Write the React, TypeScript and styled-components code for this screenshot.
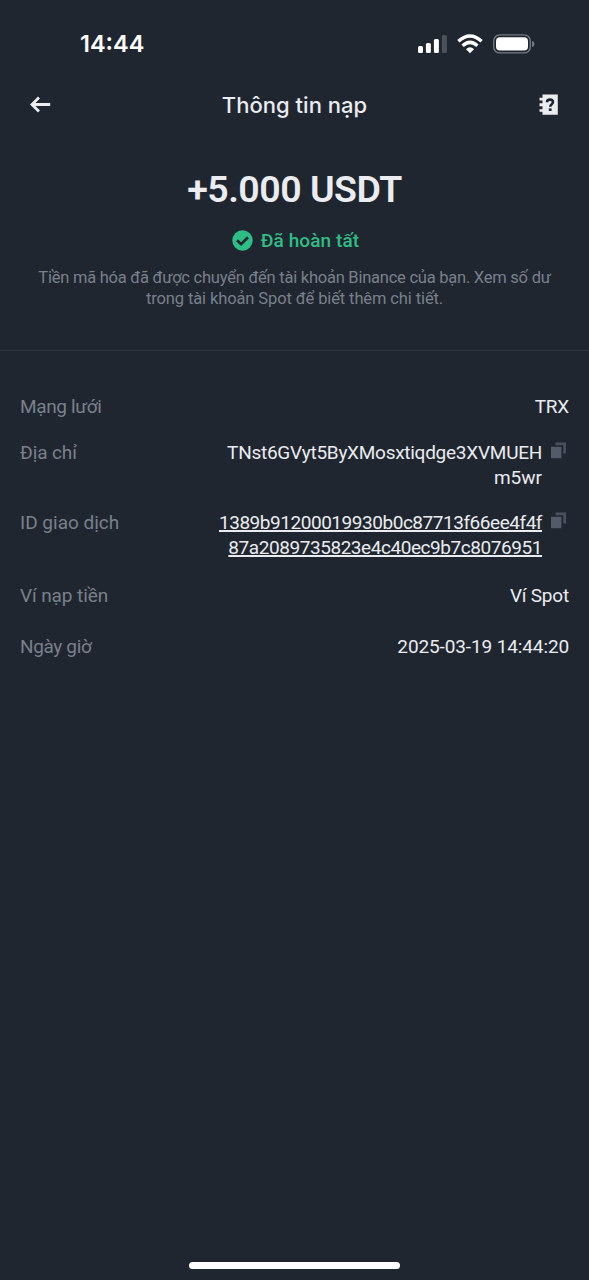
import React from 'react';
import styled, { createGlobalStyle } from 'styled-components';

const GlobalStyle = createGlobalStyle`
  * { box-sizing: border-box; }
  body { margin: 0; background: #202630; }
`;

const Screen = styled.main`
  display: flex;
  flex-direction: column;
  width: 100%;
  height: 1280px;
  background: #202630;
  color: #eaecef;
  font-family: Roboto, 'Noto Sans', sans-serif;
`;

const StatusBar = styled.div`
  display: flex;
  align-items: center;
  justify-content: space-between;
  height: 70px;
  padding: 17px 54px 0 80px;
`;

const Clock = styled.span`
  font: 600 23.5px/28px Inter, sans-serif;
  color: #fff;
`;

const Indicators = styled.div`
  display: flex;
  align-items: center;
  gap: 10px;
`;

const Header = styled.header`
  display: grid;
  grid-template-columns: 30px 1fr 30px;
  align-items: center;
  height: 70px;
  padding: 0 30px;
`;

const Title = styled.h1`
  margin: 0;
  text-align: center;
  font: 500 22px/30px Inter, sans-serif;
  letter-spacing: 0.03px;
`;

const IconButton = styled.button<{ $end?: boolean }>`
  display: flex;
  justify-content: ${(p) => (p.$end ? 'flex-end' : 'flex-start')};
  padding: 0;
  border: 0;
  background: none;
  color: #eaecef;
`;

const Summary = styled.section`
  display: flex;
  flex-direction: column;
  align-items: center;
  height: 211px;
  padding-top: 26px;
  border-bottom: 1px solid #2f3640;
`;

const Amount = styled.div`
  font-size: 37.5px;
  line-height: 46px;
  font-weight: 600;
  letter-spacing: -0.5px;
`;

const Status = styled.div`
  display: flex;
  align-items: center;
  gap: 8px;
  margin-top: 16px;
  padding-left: 2px;
  color: #2ebd85;
  font-size: 19px;
  line-height: 25px;
  font-weight: 500;
  letter-spacing: 0.1px;
`;

const Note = styled.p`
  display: flex;
  flex-direction: column;
  margin: 15px 0 0;
  text-align: center;
  color: #79808b;
  font-size: 16.5px;
  line-height: 20.5px;
`;

const Details = styled.dl`
  display: flex;
  flex-direction: column;
  margin: 0;
  padding: 44px 20px 0 20px;
`;

const Row = styled.div<{ $height: number }>`
  display: flex;
  justify-content: space-between;
  height: ${(p) => p.$height}px;
  font-size: 19px;
  line-height: 24.5px;
`;

const Label = styled.dt<{ $spacing?: number }>`
  color: #79808b;
  letter-spacing: ${(p) => p.$spacing ?? 0}px;
`;

const Value = styled.dd<{ $spacing?: number }>`
  display: flex;
  gap: 9px;
  margin: 0;
  text-align: right;
  letter-spacing: ${(p) => p.$spacing ?? 0}px;

  svg {
    margin: 1px 1px 0 0;
  }
`;

const Line = styled.span<{ $linked?: boolean; $spacing?: number }>`
  display: block;
  letter-spacing: ${(p) => p.$spacing ?? 0}px;
  text-decoration: ${(p) => (p.$linked ? 'underline' : 'none')};
  text-decoration-thickness: 1.5px;
  text-underline-offset: 1px;
  text-decoration-skip-ink: none;
`;

const HomeBar = styled.div`
  align-self: center;
  width: 211px;
  height: 7px;
  margin: auto 0 11px;
  border-radius: 4px;
  background: #fff;
`;

const SignalIcon = () => (
  <svg width="29" height="20" viewBox="0 0 29 20" fill="#fff">
    <rect x="0" y="12" width="5" height="7" rx="1.5" />
    <rect x="7.9" y="9" width="5" height="10" rx="1.5" />
    <rect x="15.9" y="5" width="5" height="14" rx="1.5" />
    <rect x="23.9" y="1" width="5" height="18" rx="1.5" fill="#4d515a" />
  </svg>
);

const WifiIcon = () => (
  <svg width="26" height="20" viewBox="0 0 26 20" fill="none" stroke="#fff" strokeWidth="3.4">
    <path d="M1.4 7.2Q13-3.3 24.6 7.2" />
    <path d="M5.6 11.7Q13 5 20.4 11.7" />
    <path d="M9 15.2Q13 11.3 17 15.2L13 19.2Z" fill="#fff" stroke="none" />
  </svg>
);

const BatteryIcon = () => (
  <svg width="42" height="20" viewBox="0 0 42 20">
    <rect x="0.7" y="0.9" width="36.6" height="18" rx="6" fill="none" stroke="#747982" strokeWidth="1.4" />
    <rect x="3" y="3.2" width="32" height="13.4" rx="4" fill="#fff" />
    <path d="M39 7Q41.5 7.7 41.5 10T39 13Z" fill="#747982" />
  </svg>
);

const BackIcon = () => (
  <svg width="21" height="18" viewBox="0 0 21 18" fill="none" stroke="currentColor" strokeWidth="2.8">
    <path d="M20.2 8.5H2.5M9 1.5L2 8.5L9 15.5" />
  </svg>
);

const GuideIcon = () => (
  <svg width="20" height="22" viewBox="0 0 20 22">
    <path fill="currentColor" d="M3.5 0.5H18.8V20.8H3.5V17.8H0.5V15.2H3.5V12.3H0.5V9.3H3.5V6.6H0.5V3.8H3.5Z" />
    <path d="M8 8.3Q8 5.6 11 5.6T14 8.1C14 10.3 11.2 10.1 11.2 12.8" fill="none" stroke="#202630" strokeWidth="2.6" />
    <rect x="9.8" y="14.4" width="2.8" height="2.6" fill="#202630" />
  </svg>
);

const CheckIcon = () => (
  <svg width="21" height="21" viewBox="0 0 21 21">
    <circle cx="10.5" cy="10.5" r="10.2" fill="#2ebd85" />
    <path d="M5 10.2L9.1 14.2L16 7.3" fill="none" stroke="#202630" strokeWidth="2.7" />
  </svg>
);

const CopyIcon = () => (
  <svg width="17" height="18" viewBox="0 0 17 18">
    <path d="M4.5 0.5H15V11.5H12.3V3.2H4.5Z" fill="#4a515c" />
    <rect x="0" y="4.8" width="10.4" height="11.4" fill="#535b69" />
  </svg>
);

export default function App() {
  return (
    <>
      <GlobalStyle />
      <Screen>
        <StatusBar>
          <Clock>14:44</Clock>
          <Indicators>
            <SignalIcon />
            <WifiIcon />
            <BatteryIcon />
          </Indicators>
        </StatusBar>
        <Header>
          <IconButton aria-label="Quay lại"><BackIcon /></IconButton>
          <Title>Thông tin nạp</Title>
          <IconButton $end aria-label="Trợ giúp"><GuideIcon /></IconButton>
        </Header>
        <Summary>
          <Amount>+5.000 USDT</Amount>
          <Status><CheckIcon />Đã hoàn tất</Status>
          <Note>
            <Line $spacing={-0.24}>
              Tiền mã hóa đã được chuyển đến tài khoản Binance của bạn. Xem số dư
            </Line>
            <Line $spacing={-0.11}>trong tài khoản Spot để biết thêm chi tiết.</Line>
          </Note>
        </Summary>
        <Details>
          <Row $height={46}>
            <Label $spacing={-0.35}>Mạng lưới</Label>
            <Value $spacing={-0.2}>TRX</Value>
          </Row>
          <Row $height={70}>
            <Label $spacing={-0.1}>Địa chỉ</Label>
            <Value>
              <div>
                <Line $spacing={-0.27}>TNst6GVyt5ByXMosxtiqdge3XVMUEH</Line>
                <Line>m5wr</Line>
              </div>
              <CopyIcon />
            </Value>
          </Row>
          <Row $height={73}>
            <Label>ID giao dịch</Label>
            <Value>
              <div>
                <Line $linked $spacing={-0.46}>1389b91200019930b0c87713f66ee4f4f</Line>
                <Line $linked $spacing={-0.44}>87a2089735823e4c40ec9b7c8076951</Line>
              </div>
              <CopyIcon />
            </Value>
          </Row>
          <Row $height={51}>
            <Label $spacing={-0.1}>Ví nạp tiền</Label>
            <Value $spacing={-0.2}>Ví Spot</Value>
          </Row>
          <Row $height={25}>
            <Label $spacing={-0.35}>Ngày giờ</Label>
            <Value $spacing={-0.12}>2025-03-19 14:44:20</Value>
          </Row>
        </Details>
        <HomeBar />
      </Screen>
    </>
  );
}
